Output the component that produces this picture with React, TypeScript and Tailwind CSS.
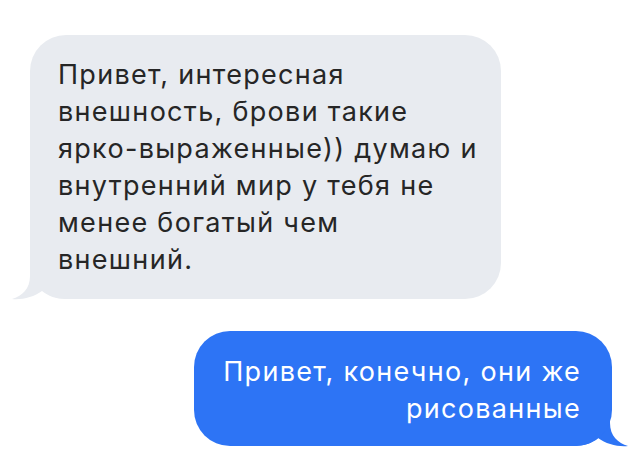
import React from 'react';

const TAIL = 'M18 2 L18 22 C18 35 10 42 0 45 C10 46 22 43 30 37 C36 42 44 45 54 45 L54 2 Z';

function Tail({ side, color }: { side: 'left' | 'right'; color: string }) {
  const pos = side === 'left' ? 'left-[-18px]' : 'right-[-16px] -scale-x-100';
  return (
    <svg
      width="60"
      height="45"
      viewBox="0 0 60 45"
      className={`absolute bottom-0 overflow-visible ${pos}`}
    >
      <path d={TAIL} fill={color} />
    </svg>
  );
}

const incoming = [
  'Привет, интересная',
  'внешность, брови такие',
  'ярко-выраженные)) думаю и',
  'внутренний мир у тебя не',
  'менее богатый чем',
  'внешний.',
];

const outgoing = ['Привет, конечно, они же', 'рисованные'];

export default function App() {
  return (
    <div className="w-[640px] h-[467px] bg-white flex flex-col font-['Inter',sans-serif] text-[27px] leading-[37px] tracking-[1.3px]">
      {/* incoming */}
      <div className="pl-[30px] pt-[35px]">
        <div className="relative w-[471px]">
          <Tail side="left" color="#e8ebf0" />
          <div className="relative bg-[#e8ebf0] rounded-[36px] pl-[28px] pr-[20px] pt-[21px] pb-[21px] text-[#262626]">
            {incoming.map((l) => (
              <div key={l} className="whitespace-nowrap">{l}</div>
            ))}
          </div>
        </div>
      </div>

      {/* outgoing */}
      <div className="flex justify-end pr-[28px] pt-[32px]">
        <div className="relative w-[418px]">
          <Tail side="right" color="#2d74f5" />
          <div className="relative bg-[#2d74f5] rounded-[36px] pl-[24px] pr-[31px] pt-[22px] pb-[19px] text-white text-right">
            {outgoing.map((l) => (
              <div key={l} className="whitespace-nowrap">{l}</div>
            ))}
          </div>
        </div>
      </div>
    </div>
  );
}
